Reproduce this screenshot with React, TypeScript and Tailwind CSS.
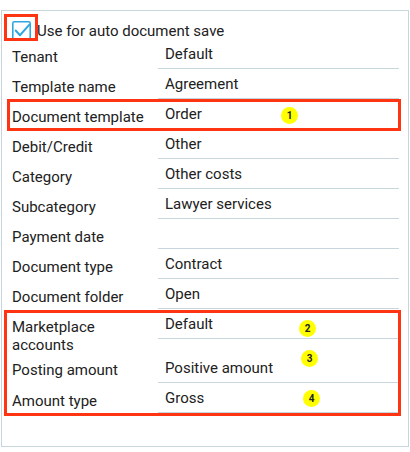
import React from 'react'

type Row = {
  label: React.ReactNode
  value: string
  tall?: boolean
}

const rows: Row[] = [
  { label: 'Tenant', value: 'Default' },
  { label: 'Template name', value: 'Agreement' },
  { label: 'Document template', value: 'Order' },
  { label: 'Debit/Credit', value: 'Other' },
  { label: 'Category', value: 'Other costs' },
  { label: 'Subcategory', value: 'Lawyer services' },
  { label: 'Payment date', value: '' },
  { label: 'Document type', value: 'Contract' },
  { label: 'Document folder', value: 'Open' },
  {
    label: (
      <>
        Marketplace
        <br />
        accounts
      </>
    ),
    value: 'Default',
  },
  { label: 'Posting amount', value: 'Positive amount', tall: true },
  { label: 'Amount type', value: 'Gross' },
]

function CheckIcon() {
  return (
    <svg width="19" height="19" viewBox="0 0 18 18" fill="none" className="shrink-0">
      <rect
        x="0.75"
        y="0.75"
        width="16.5"
        height="16.5"
        rx="1.5"
        stroke="#2ea6df"
        strokeWidth="1.5"
      />
      <polyline
        points="3.5,9 7.5,13.5 16.5,3.5"
        stroke="#2ea6df"
        strokeWidth="1.8"
        strokeLinecap="round"
        strokeLinejoin="round"
      />
    </svg>
  )
}

function Marker({ n, className }: { n: number; className: string }) {
  return (
    <div
      className={`absolute w-[17px] h-[17px] rounded-full bg-[#ffff00] flex items-center justify-center text-[10px] font-bold text-[#222] ${className}`}
    >
      {n}
    </div>
  )
}

export default function App() {
  return (
    <div
      className="relative w-[410px] h-[452px] bg-white text-[15px] text-[#212121] pt-[10px] pl-[1px]"
      style={{ fontFamily: 'Roboto, "Liberation Sans", sans-serif' }}
    >
      <div className="w-[408px] h-[437px] border border-[#c7d5dc] pt-[11px] pr-[9px]">
        <div className="flex items-center h-[17px] pl-[10px] gap-[6px] leading-[18px]">
          <CheckIcon />
          <span>Use for auto document save</span>
        </div>

        <div className="flex flex-col">
          {rows.map((row, i) => (
            <div key={i} className={`flex ${row.tall ? 'h-[44px]' : 'h-[30px]'}`}>
              <div
                className={`w-[156px] pl-[10px] leading-[18px] whitespace-nowrap ${
                  row.tall ? 'pt-[22px]' : 'pt-[9px]'
                }`}
              >
                {row.label}
              </div>
              <div
                className={`flex-1 border-b border-[#c7d5dc] pl-[7px] leading-[18px] ${
                  row.tall ? 'pt-[20px]' : 'pt-[6px]'
                }`}
              >
                {row.value}
              </div>
            </div>
          ))}
        </div>
      </div>

      {/* annotations */}
      <div className="absolute left-[4px] top-[14px] w-[34px] h-[27px] border-[3px] border-[#ff3413]" />
      <div className="absolute left-[7px] top-[99px] w-[394px] h-[32px] border-[3px] border-[#ff3413]" />
      <div className="absolute left-[4px] top-[310px] w-[397px] h-[106px] border-[3px] border-[#ff3413]" />

      <Marker n={1} className="left-[281px] top-[107px]" />
      <Marker n={2} className="left-[299px] top-[320px]" />
      <Marker n={3} className="left-[301px] top-[350px]" />
      <Marker n={4} className="left-[303px] top-[390px]" />
    </div>
  )
}
